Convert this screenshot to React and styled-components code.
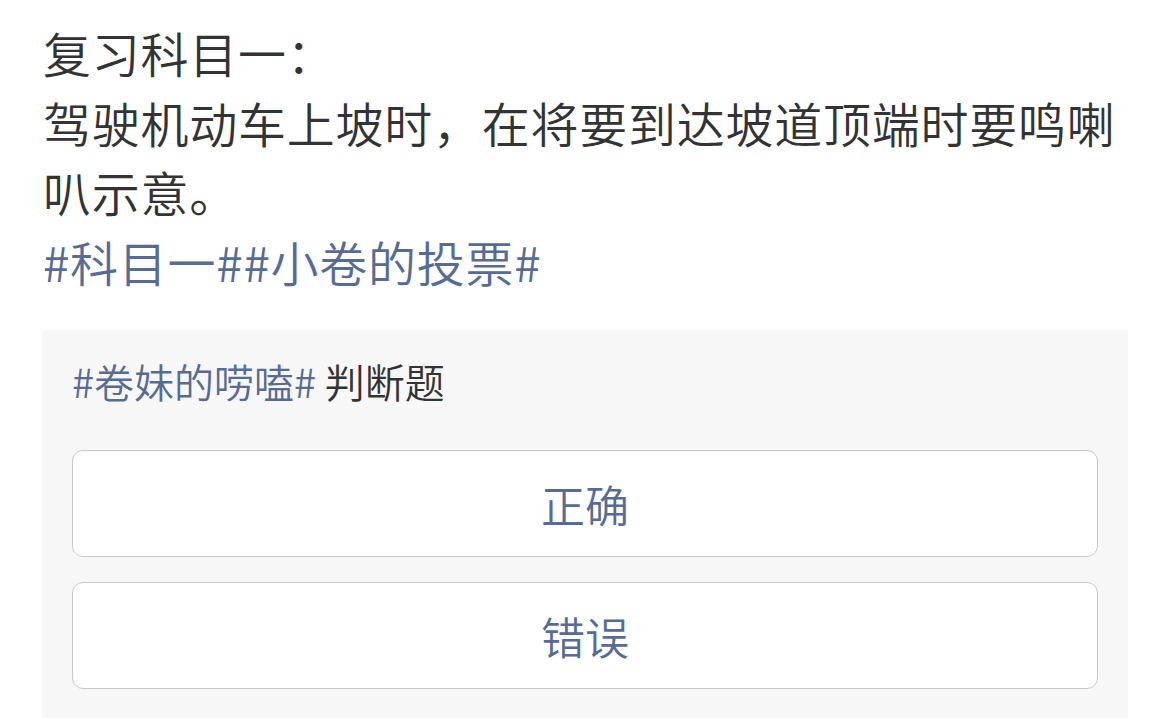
import styled, { createGlobalStyle } from 'styled-components';

const GlobalStyle = createGlobalStyle`
  html, body {
    margin: 0;
    padding: 0;
    background: #ffffff;
  }
  body {
    font-family: 'Noto Sans CJK SC', 'Noto Sans', sans-serif;
    color: #333333;
  }
`;

const Page = styled.div`
  width: 1169px;
  height: 718px;
  overflow: hidden;
  padding: 18px 41px 0 43px;
  box-sizing: border-box;
`;

const PostText = styled.div`
  font-size: 48px;
  font-weight: 350;
  letter-spacing: 0.75px;
  line-height: 1.45;
  color: #333333;
  margin-bottom: 34px;
`;

const Topic = styled.span`
  color: #576b95;
`;

const VotePanel = styled.div`
  margin-left: -1px;
  background: #f7f7f7;
  padding: 22px 30px 30px 30px;
  display: flex;
  flex-direction: column;
  gap: 25px;
`;

const VoteTitle = styled.div`
  font-size: 40px;
  font-weight: 350;
  line-height: 1.45;
  color: #333333;
  margin-bottom: 15px;
`;

const Option = styled.button`
  height: 107px;
  width: 100%;
  box-sizing: border-box;
  background: #ffffff;
  border: 1.5px solid #c9c9c9;
  border-radius: 11px;
  font-family: inherit;
  font-size: 44px;
  font-weight: 350;
  color: #576b95;
  display: flex;
  align-items: center;
  justify-content: center;
  padding: 0;
  cursor: pointer;
`;

function App() {
  const options = ['正确', '错误'];
  return (
    <Page>
      <GlobalStyle />
      <PostText>
        复习科目一：<br />
        驾驶机动车上坡时，在将要到达坡道顶端时要鸣喇叭示意。<br />
        <Topic>#科目一##小卷的投票#</Topic>
      </PostText>
      <VotePanel>
        <VoteTitle>
          <Topic>#卷妹的唠嗑#</Topic> 判断题
        </VoteTitle>
        {options.map((o) => (
          <Option key={o}>{o}</Option>
        ))}
      </VotePanel>
    </Page>
  );
}

export default App;
